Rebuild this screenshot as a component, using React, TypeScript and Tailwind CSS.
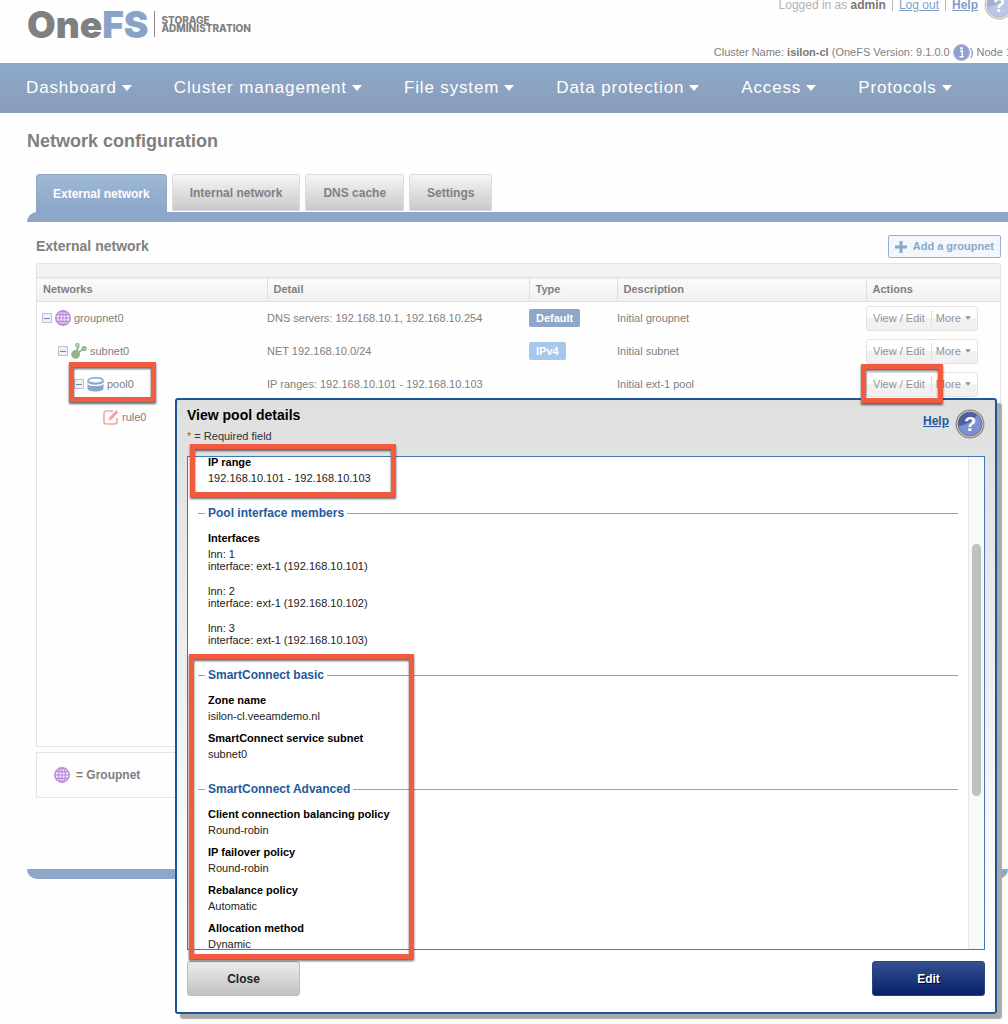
import type { ReactNode } from 'react';
import { clsx } from 'clsx';

const navItems = ['Dashboard', 'Cluster management', 'File system', 'Data protection', 'Access', 'Protocols'];

const tabs = ['External network', 'Internal network', 'DNS cache', 'Settings'];

const rows = [
  {
    name: 'groupnet0',
    icon: <GlobeIcon />,
    indent: 'pl-[5px]',
    detail: 'DNS servers: 192.168.10.1, 192.168.10.254',
    type: 'Default',
    typeColor: 'bg-[#8ea6c8]',
    description: 'Initial groupnet',
  },
  {
    name: 'subnet0',
    icon: <SubnetIcon />,
    indent: 'pl-[21px]',
    detail: 'NET 192.168.10.0/24',
    type: 'IPv4',
    typeColor: 'bg-[#a5c8ec]',
    description: 'Initial subnet',
  },
  {
    name: 'pool0',
    icon: <PoolIcon />,
    indent: 'pl-[37px]',
    detail: 'IP ranges: 192.168.10.101 - 192.168.10.103',
    type: '',
    typeColor: '',
    description: 'Initial ext-1 pool',
  },
];

const interfaces = [
  { lnn: 1, ip: '192.168.10.101' },
  { lnn: 2, ip: '192.168.10.102' },
  { lnn: 3, ip: '192.168.10.103' },
];

function GlobeIcon() {
  return (
    <svg className="h-4 w-4 shrink-0" viewBox="0 0 16 16" fill="none" stroke="#b98ad6">
      <circle cx="8" cy="8" r="7.2" fill="#f3e6fa" strokeWidth="1.5" />
      <ellipse cx="8" cy="8" rx="3.4" ry="7" strokeWidth="1.1" />
      <path d="M8 1v14M1 8h14M2.2 4.6h11.6M2.2 11.4h11.6" strokeWidth="1.1" />
    </svg>
  );
}

function SubnetIcon() {
  return (
    <svg className="h-4 w-4 shrink-0" viewBox="0 0 16 16" fill="none" stroke="#94b58e">
      <path d="M5.5 9L7.500 3M5 10.500l8-4.500" strokeWidth="2" />
      <circle cx="4.6" cy="11.3" r="4.4" fill="#94b58e" stroke="none" />
      <circle cx="6.4" cy="2.2" r="1.500" fill="#fff" strokeWidth="1.500" />
      <circle cx="13.200" cy="5.500" r="1.600" fill="#fff" strokeWidth="2" />
    </svg>
  );
}

function PoolIcon() {
  return (
    <svg className="h-[15px] w-[17px] shrink-0" viewBox="0 0 17 15">
      <path d="M.5 3.500v8C.5 13.400 4 14.500 8.500 14.500s8-1.100 8-3v-8z" fill="#8ba6cb" />
      <ellipse cx="8.500" cy="3.500" rx="7.500" ry="2.700" fill="#fff" stroke="#8ba6cb" strokeWidth="1.400" />
      <path d="M.5 6.200c1.500 1.600 4.500 2.100 8 2.100s6.500-.5 8-2.100" fill="none" stroke="#fff" strokeWidth="1.300" />
    </svg>
  );
}

function RuleIcon() {
  return (
    <svg className="h-4 w-4 shrink-0" viewBox="0 0 16 16" fill="none" stroke="#f3a5a5">
      <path d="M10 2H3.200A2.200 2.200 0 0 0 1 4.200v8.600A2.200 2.200 0 0 0 3.200 15h8.600a2.200 2.200 0 0 0 2.200-2.200V9" strokeWidth="1.600" />
      <path d="M5.500 11.500l.8-3.300L13 1.500c.6-.6 2.900 1.400 2.200 2.200L8.600 10.500z" fill="#f3a5a5" stroke="none" />
    </svg>
  );
}

function HelpIcon({ faded = false }: { faded?: boolean }) {
  return (
    <svg className={clsx('h-[30px] w-[30px] shrink-0', faded && 'opacity-50')} viewBox="0 0 30 30">
      <circle cx="15" cy="15" r="14.500" fill="#8e8e8e" />
      <circle cx="15" cy="15" r="13.200" fill="#cfcfcf" />
      <circle cx="15" cy="15" r="12" fill="#7b90d2" stroke="#70747f" />
      <path d="M3.500 17A11.600 11.600 0 0 1 22 5.800C18 12 11 16 3.500 17z" fill="#4a60a0" />
      <text x="15" y="22" textAnchor="middle" fontSize="20" fontWeight="bold" fill="#fff">?</text>
    </svg>
  );
}

function InfoIcon() {
  return (
    <svg className="h-[17px] w-[17px] shrink-0" viewBox="0 0 17 17">
      <circle cx="8.500" cy="8.500" r="8" fill="#8f9fd4" stroke="#b3bad0" />
      <circle cx="8.500" cy="4.200" r="1.300" fill="#fff" />
      <path d="M7 7h2.300v5.500M6.500 12.800h4.200" stroke="#fff" strokeWidth="1.500" fill="none" />
    </svg>
  );
}

function Toggle() {
  return (
    <button aria-label="Collapse" className="grid h-[10px] w-[10px] shrink-0 place-items-center border border-[#b9c3d4] bg-[#eef2f8]">
      <span className="h-px w-1.5 bg-[#7886a0]" />
    </button>
  );
}

function Caret({ className }: { className?: string }) {
  return (
    <svg className={className} viewBox="0 0 10 6" fill="currentColor">
      <path d="M0 0h10L5 6z" />
    </svg>
  );
}

function TreeItem({ indent, icon, name, leaf = false }: { indent: string; icon: ReactNode; name: string; leaf?: boolean }) {
  return (
    <div className={clsx('flex items-center gap-[3px]', indent)}>
      {!leaf && <Toggle />}
      {icon}
      <span>{name}</span>
    </div>
  );
}

function RowActions() {
  return (
    <div className="flex h-[25px] w-28 items-center rounded-[3px] border border-[#e2e2e2] bg-linear-to-b from-white from-50% to-[#f1f1f1] to-50% text-[#939393]">
      <button className="pl-1.5">View / Edit</button>
      <span className="mr-1 ml-1.5 h-4 w-px bg-[#e0e0e0]" />
      <button className="flex items-center gap-1">
        More
        <Caret className="h-1 w-1.5" />
      </button>
    </div>
  );
}

function Highlight({ className }: { className: string }) {
  return (
    <div className={clsx('pointer-events-none absolute border-[5px] border-[#f25a42] drop-shadow-[0_2px_1px_rgba(0,0,0,0.6)]', className)} />
  );
}

function Section({ title, children }: { title: string; children: ReactNode }) {
  return (
    <section className="pt-3">
      <div className="mb-2.5 flex items-center gap-[3px]">
        <span className="h-px w-[7px] bg-[#8aa5c4]" />
        <h3 className="text-[12px] leading-4 font-bold text-[#235a9b]">{title}</h3>
        <span className="h-px flex-1 bg-[#8aa5c4]" />
      </div>
      {children}
    </section>
  );
}

function Field({ label, children }: { label: string; children: ReactNode }) {
  return (
    <dl className="mb-[9px] pl-2.5">
      <dt className="text-[11px] leading-[15px] font-bold text-black">{label}</dt>
      <dd className="flex flex-col gap-[13px] pt-0.5 text-[11px] leading-3 text-[#222]">{children}</dd>
    </dl>
  );
}

function PoolDialog() {
  return (
    <div
      role="dialog"
      aria-labelledby="dialog-title"
      className="absolute top-[398px] right-[11px] left-[175px] z-10 rounded-[3px] border-2 border-[#1d5596] bg-linear-to-b from-[#dfdfdf] to-white to-90% px-2.5 pb-4 shadow-[5px_5px_1px_#a9a9a9]"
    >
      <div className="flex h-14 justify-between">
        <div className="pt-1.5">
          <h2 id="dialog-title" className="text-[14px] leading-[18px] font-bold text-black">View pool details</h2>
          <p className="mt-1 text-[11px] leading-4 text-[#333]">
            <span className="text-[#d8431f]">*</span> = Required field
          </p>
        </div>
        <div className="flex items-start gap-1.5 pt-[9px]">
          <a href="#help" className="pt-1 text-[12px] leading-4 font-bold text-[#235a9b] underline">Help</a>
          <HelpIcon />
        </div>
      </div>

      <div className="flex h-[494px] overflow-hidden border border-[#4577b0] bg-white">
        <div className="-mt-0.5 min-w-0 flex-1 pr-2.5 pl-2.5">
          <Field label="IP range">
            <span>192.168.10.101 - 192.168.10.103</span>
          </Field>
          <Section title="Pool interface members">
            <Field label="Interfaces">
              {interfaces.map((item) => (
                <div key={item.lnn}>
                  <div>lnn: {item.lnn}</div>
                  <div>interface: ext-1 ({item.ip})</div>
                </div>
              ))}
            </Field>
          </Section>
          <Section title="SmartConnect basic">
            <Field label="Zone name">isilon-cl.veeamdemo.nl</Field>
            <Field label="SmartConnect service subnet">subnet0</Field>
          </Section>
          <Section title="SmartConnect Advanced">
            <Field label="Client connection balancing policy">Round-robin</Field>
            <Field label="IP failover policy">Round-robin</Field>
            <Field label="Rebalance policy">Automatic</Field>
            <Field label="Allocation method">Dynamic</Field>
          </Section>
        </div>
        <div className="w-4 border-l border-[#e6e6e6] bg-[#f9f9f9] pt-[87px] pl-[3px]">
          <div className="h-[252px] w-[9px] rounded-full bg-[#c1c1c1]" />
        </div>
      </div>

      <div className="mt-[11px] flex justify-between text-[12px] font-bold">
        <button className="h-[35px] w-[113px] rounded-[3px] border border-[#bdbdbd] bg-linear-to-b from-[#ececec] to-[#c2c2c2] text-[#222]">
          Close
        </button>
        <button className="h-[35px] w-[113px] rounded-[3px] border border-[#2a4383] bg-linear-to-b from-[#35508f] to-[#08206b] text-white text-shadow-[1px_1px_0_#000]">
          Edit
        </button>
      </div>

      <Highlight className="top-[44px] left-[13px] h-[53px] w-[206px]" />
      <Highlight className="top-[254px] left-[12px] h-[305px] w-[225px]" />
    </div>
  );
}

export default function App() {
  return (
    <div className="relative min-h-screen overflow-hidden bg-[#fefefe] pb-36 font-['Liberation_Sans',Arial,sans-serif] text-[11px] text-[#808080]">
      <header className="flex h-[63px] justify-between overflow-hidden pl-[27px] whitespace-nowrap">
        <div className="flex h-12 items-center font-['Inter',sans-serif]">
          <span className="text-[37px] leading-none font-black">
            One<span className="text-[#8aa4c8]">FS</span>
          </span>
          <span className="mr-1.5 ml-1.5 h-[26px] w-px bg-[#8c8c8c]" />
          <span className="text-[10px] leading-[8px] font-extrabold">
            <span className="block">STORAGE</span>
            <span className="block">ADMINISTRATION</span>
          </span>
        </div>
        <div className="flex flex-col items-end justify-between pb-0.5">
          <div className="-mt-2.5 -mr-1.5 flex items-center gap-1.5 text-[12px] text-[#b2b2b2]">
            <span>
              Logged in as <b className="text-[#777]">admin</b>
            </span>
            <span className="h-3 w-px bg-[#bbb]" />
            <a href="#logout" className="text-[#7f9fc8] underline">Log out</a>
            <span className="h-3 w-px bg-[#bbb]" />
            <a href="#help" className="font-bold text-[#7f9fc8] underline">Help</a>
            <HelpIcon faded />
          </div>
          <div className="-mr-1 flex items-center">
            <span>
              Cluster Name: <b className="text-[#777]">isilon-cl</b> (OneFS Version: 9.1.0.0&nbsp;
            </span>
            <InfoIcon />
            <span>) Node 1</span>
          </div>
        </div>
      </header>

      <nav className="flex h-[50px] items-center gap-[42px] bg-linear-to-b from-[#8da8ca] to-[#899db8] pl-[26px] text-[17px] tracking-wider whitespace-nowrap text-white">
        {navItems.map((item) => (
          <button key={item} className="flex items-center gap-[5px]">
            {item}
            <Caret className="h-[6px] w-[10px]" />
          </button>
        ))}
      </nav>

      <main className="pl-[27px]">
        <h1 className="pt-4 text-[18px] leading-6 font-bold">Network configuration</h1>

        <div className="mt-[21px] flex items-start gap-[5px] pl-[9px] text-[12px] font-bold">
          {tabs.map((tab, index) => (
            <button
              key={tab}
              className={clsx(
                'rounded-t-[3px] border',
                index === 0
                  ? 'h-[39px] border-[#8ea6c8] bg-linear-to-b from-[#9fb9d4] to-[#8ba6c8] px-4 text-white'
                  : 'h-[37px] border-[#dcdcdc] bg-linear-to-b from-[#f6f6f6] to-[#c9c9c9] px-[17px]',
              )}
            >
              {tab}
            </button>
          ))}
        </div>
        <div className="-mt-px h-2.5 rounded-tl-[10px] bg-[#8ea6c8]" />

        <div className="pr-[7px] pl-[9px]">
          <div className="mt-[13px] flex h-[23px] items-center justify-between">
            <h2 className="text-[14px] font-bold">External network</h2>
            <button className="flex h-[23px] items-center gap-1.5 rounded-[2px] border border-[#93b0d6] bg-[#f2f6fd] px-1.5 font-bold text-[#8ea6c8]">
              <svg className="h-3 w-3" viewBox="0 0 12 12" fill="#8ea6c8">
                <path d="M4.500 0h3v4.500H12v3H7.500V12h-3V7.500H0v-3h4.500z" />
              </svg>
              Add a groupnet
            </button>
          </div>

          <div className="mt-[5px] min-h-[484px] rounded-t-[3px] border border-[#e6e0e2]">
            <div className="h-[13px] bg-[#f3f3f4]" />
            <table className="w-full table-fixed text-left">
              <thead>
                <tr className="h-6 border-y border-[#e0e0e0] bg-linear-to-b from-[#fbfbfb] to-[#f0f0f1]">
                  <th className="w-[230px] pl-1.5">Networks</th>
                  <th className="w-[262px] border-l border-[#e0e0e0] pl-1.5">Detail</th>
                  <th className="w-[88px] border-l border-[#e0e0e0] pl-1.5">Type</th>
                  <th className="border-l border-[#e0e0e0] pl-1.5">Description</th>
                  <th className="w-[134px] border-l border-[#e0e0e0] pl-1.5">Actions</th>
                </tr>
              </thead>
              <tbody>
                {rows.map((row) => (
                  <tr key={row.name} className="h-[33px]">
                    <td className="p-0">
                      <TreeItem indent={row.indent} icon={row.icon} name={row.name} />
                    </td>
                    <td className="p-0">{row.detail}</td>
                    <td className="p-0">
                      {row.type && (
                        <span className={clsx('inline-block rounded-[2px] px-[7px] leading-[18px] font-bold text-white', row.typeColor)}>
                          {row.type}
                        </span>
                      )}
                    </td>
                    <td className="p-0">{row.description}</td>
                    <td className="p-0">
                      <RowActions />
                    </td>
                  </tr>
                ))}
                <tr className="h-[33px]">
                  <td className="p-0">
                    <TreeItem indent="pl-[66px]" icon={<RuleIcon />} name="rule0" leaf />
                  </td>
                </tr>
              </tbody>
            </table>
          </div>

          <div className="mt-[5px] flex h-[46px] items-center gap-1.5 border border-[#e4e4e4] pl-[17px] text-[12px] font-bold">
            <GlobeIcon />
            = Groupnet
          </div>
        </div>
        <div className="mt-[71px] h-2.5 rounded-b-[10px] bg-[#8ea6c8]" />
      </main>

      <PoolDialog />

      <Highlight className="top-[362px] left-[69px] z-20 h-10 w-[87px]" />
      <Highlight className="top-[364px] right-[65px] z-20 h-[39px] w-[82px]" />
    </div>
  );
}
